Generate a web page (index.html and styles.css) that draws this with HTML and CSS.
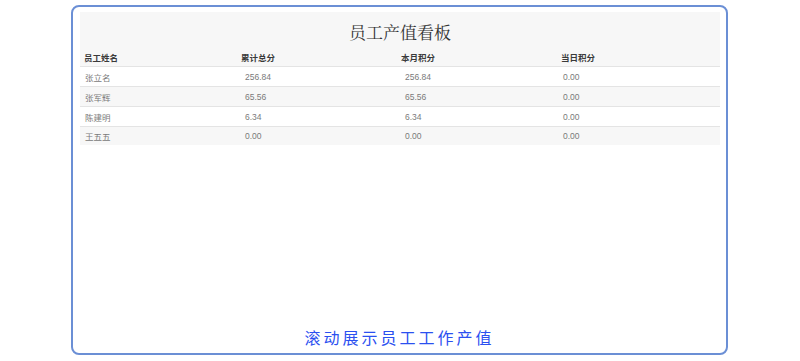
FILE: index.html
```html
<!DOCTYPE html>
<html lang="zh-CN">
<head>
<meta charset="utf-8">
<title>员工产值看板</title>
<link rel="stylesheet" href="styles.css">
</head>
<body>
<div class="frame">
  <div class="panel">
    <div class="title">员工产值看板</div>
    <div class="row head">
      <div class="cell">员工姓名</div>
      <div class="cell">累计总分</div>
      <div class="cell">本月积分</div>
      <div class="cell">当日积分</div>
    </div>
    <div class="row">
      <div class="cell">张立名</div>
      <div class="cell">256.84</div>
      <div class="cell">256.84</div>
      <div class="cell">0.00</div>
    </div>
    <div class="row alt">
      <div class="cell">张军辉</div>
      <div class="cell">65.56</div>
      <div class="cell">65.56</div>
      <div class="cell">0.00</div>
    </div>
    <div class="row">
      <div class="cell">陈建明</div>
      <div class="cell">6.34</div>
      <div class="cell">6.34</div>
      <div class="cell">0.00</div>
    </div>
    <div class="row alt">
      <div class="cell">王五五</div>
      <div class="cell">0.00</div>
      <div class="cell">0.00</div>
      <div class="cell">0.00</div>
    </div>
  </div>
  <div class="spacer"></div>
  <div class="footer">滚动展示员工工作产值</div>
</div>
</body>
</html>
```

FILE: styles.css
```css
html, body {
  margin: 0;
  padding: 0;
  background: #ffffff;
}
body {
  font-family: "Liberation Sans", "Noto Sans CJK SC", sans-serif;
}
.frame {
  box-sizing: border-box;
  width: 657px;
  height: 350px;
  margin: 5px 0 0 71px;
  border: 2px solid #6b8fd5;
  border-radius: 8px;
  display: flex;
  flex-direction: column;
}
.panel {
  margin: 5px 6px 0 7px;
  background: #f7f7f7;
  display: flex;
  flex-direction: column;
}
.title {
  padding-top: 5px;
  height: 30px;
  line-height: 30px;
  text-align: center;
  font-family: "Noto Serif CJK SC", "Liberation Serif", "Noto Sans CJK SC", serif;
  font-size: 17px;
  color: #333333;
}
.row {
  display: grid;
  grid-template-columns: repeat(4, 1fr);
  height: 19px;
  border-top: 1px solid #e4e4e4;
  background: #ffffff;
  align-items: center;
  font-size: 8.5px;
  color: #7a7a7a;
}
.row:last-child {
  height: 18px;
}
.row .cell {
  padding-left: 5px;
}
.row .cell:nth-child(4) {
  padding-left: 3px;
}
.row.alt {
  background: #f7f7f7;
}
.row.head {
  border-top: none;
  background: #f7f7f7;
  font-weight: bold;
  color: #3a3a3a;
}
.row.head .cell {
  padding-left: 1px;
}
.row.head .cell:first-child {
  padding-left: 4px;
}
.spacer {
  flex: 1;
}
.footer {
  text-align: center;
  font-family: "Noto Sans CJK SC", sans-serif;
  font-size: 16px;
  letter-spacing: 3px;
  line-height: 20px;
  padding-bottom: 6px;
  color: #2b50f0;
}
```
